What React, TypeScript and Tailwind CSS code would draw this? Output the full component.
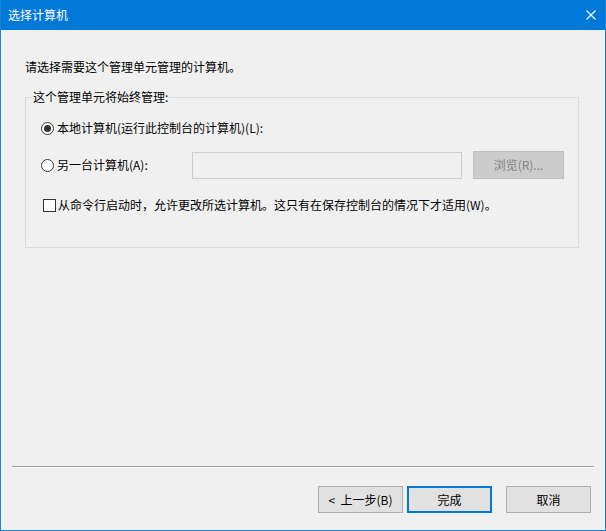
import React from 'react';

function Radio({ checked }: { checked?: boolean }) {
  return (
    <span className="w-[13px] h-[13px] rounded-full border border-[#333333] bg-white flex items-center justify-center shrink-0">
      {checked && <span className="w-[7px] h-[7px] rounded-full bg-[#333333]" />}
    </span>
  );
}

function Button({ label, primary }: { label: string; primary?: boolean }) {
  return (
    <button
      className={
        primary
          ? 'w-[85px] h-[27px] bg-[#e1e1e1] border-2 border-[#0078d7] text-black text-[12px] leading-[16px]'
          : 'w-[85px] h-[27px] bg-[#e1e1e1] border border-[#adadad] text-black text-[12px] leading-[16px]'
      }
    >
      {label}
    </button>
  );
}

export default function App() {
  return (
    <div className="w-[606px] h-[531px] flex flex-col border-x border-b border-[#1883d7] font-['Noto_Sans_CJK_SC',sans-serif] text-[12px] leading-[16px] text-black select-none">
      {/* title bar */}
      <div className="h-[30px] shrink-0 bg-[#0078d7] flex items-center justify-between pl-[7px] pr-[9px]">
        <span className="text-white">选择计算机</span>
        <svg width="10" height="10" viewBox="0 0 10 10" className="shrink-0">
          <path d="M0.5 0.5 L9.5 9.5 M9.5 0.5 L0.5 9.5" stroke="white" strokeWidth="1.1" />
        </svg>
      </div>

      {/* body */}
      <div className="flex-1 bg-[#f0f0f0] flex flex-col">
        <div className="pl-[24px] pt-[29px]">
          <p>请选择需要这个管理单元管理的计算机。</p>

          <fieldset className="mt-[14px] w-[554px] h-[159px] border border-[#dcdcdc]">
            <legend className="ml-[6px] px-[1px]">这个管理单元将始终管理:</legend>

            <div className="pl-[15px] pt-[15px] flex flex-col">
              <label className="flex items-center gap-[3px] h-[16px]">
                <Radio checked />
                <span>本地计算机(运行此控制台的计算机)(L):</span>
              </label>

              <div className="mt-[15px] flex items-center">
                <label className="flex items-center gap-[3px] w-[151px]">
                  <Radio />
                  <span>另一台计算机(A):</span>
                </label>
                <div className="w-[270px] h-[27px] border border-[#cccccc] bg-[#f0f0f0]" />
                <button className="ml-[11px] w-[91px] h-[28px] bg-[#cccccc] border border-[#bfbfbf] text-[#838383]">
                  浏览(R)...
                </button>
              </div>

              <label className="mt-[18px] ml-[2px] flex items-center gap-[2px] h-[16px]">
                <span className="w-[13px] h-[13px] border border-[#333333] bg-white shrink-0" />
                <span>从命令行启动时，允许更改所选计算机。这只有在保存控制台的情况下才适用(W)。</span>
              </label>
            </div>
          </fieldset>
        </div>

        <div className="mt-auto mx-[11px] border-t border-t-[#a0a0a0] border-b border-b-white" />

        <div className="mt-[18px] mb-[17px] pr-[14px] flex justify-end">
          <Button label={'<\u00a0\u00a0上一步(B)'} />
          <div className="ml-[4px]">
            <Button label="完成" primary />
          </div>
          <div className="ml-[14px]">
            <Button label="取消" />
          </div>
        </div>
      </div>
    </div>
  );
}
